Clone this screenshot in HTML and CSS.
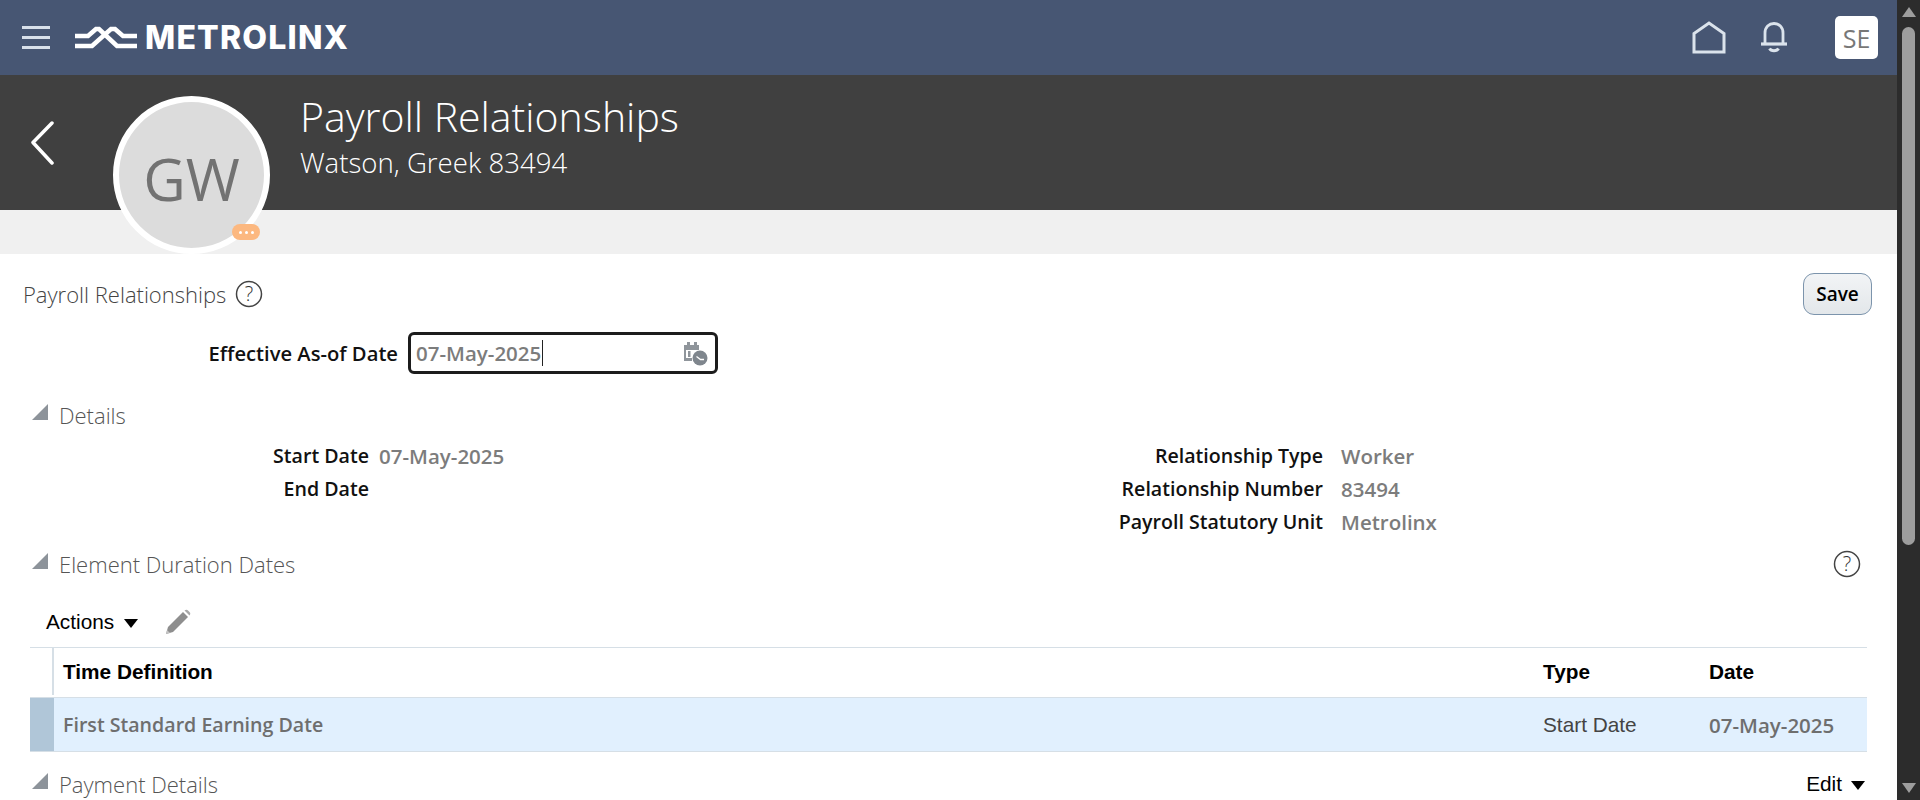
FILE: index.html
```html
<!DOCTYPE html>
<html lang="en">

<head>
    <meta charset="UTF-8">
    <meta name="viewport" content="width=device-width, initial-scale=1.0">
    <title>Payroll Relationships</title>
    <link rel="stylesheet" href="styles.css">
</head>

<body>
    <div id="app">
        <div id="page">
            <header class="topbar">
                <div class="hamburger"><span></span><span></span><span></span></div>
                <svg class="logo-mark" width="62" height="24" viewBox="0 0 62 24" fill="none" stroke="#fff" stroke-width="4.500">
                    <path d="M0 10H13L21 3H24L42 20H62" />
                    <path d="M0 20H17L36 3H40L48 10H62" />
                </svg>
                <span class="logo-text">METROLINX</span>
                <div class="topbar-right">
                    <svg class="home-icon" width="34" height="33" viewBox="0 0 34 33" fill="none" stroke="#dbe3ec" stroke-width="3">
                        <path d="M2 31V12.500L17 2L32 12.500V31Z" />
                    </svg>
                    <svg class="bell-icon" width="28" height="31" viewBox="0 0 28 31" fill="none" stroke="#dbe3ec" stroke-width="2.800">
                        <path d="M5 21V11C5 5 9 1.500 14 1.500S23 5 23 11V21" />
                        <path d="M1 22H27" stroke-width="3.200" />
                        <path d="M9.500 26.500C11 29.500 17 29.500 18.500 26.500" />
                    </svg>
                    <div class="user-box">SE</div>
                </div>
            </header>

            <div class="title-band">
                <svg class="back-icon" width="24" height="44" viewBox="0 0 24 44" fill="none" stroke="#fff" stroke-width="3.500" stroke-linecap="round" stroke-linejoin="round">
                    <path d="M21 2L2 21.500L21 42" />
                </svg>
                <div class="title-text">
                    <h1>Payroll Relationships</h1>
                    <div class="subtitle">Watson, Greek 83494</div>
                </div>
            </div>
            <div class="gray-band"></div>

            <div class="avatar">
                <span>GW</span>
                <div class="avatar-badge"><i></i><i></i><i></i></div>
            </div>

            <main class="content">
                <div class="page-head">
                    <h2>Payroll Relationships</h2>
                    <svg class="help" width="28" height="28" viewBox="0 0 28 28">
                        <circle cx="14" cy="14" r="12.500" fill="none" stroke="#444" stroke-width="1.500" />
                        <text x="14" y="21" text-anchor="middle" class="help-mark">?</text>
                    </svg>
                    <button class="save-btn">Save</button>
                </div>

                <div class="date-row">
                    <label class="date-label">Effective As-of Date</label>
                    <div class="date-input">
                        <span class="date-value">07-May-2025</span><span class="caret"></span>
                        <svg class="cal-icon" width="26" height="26" viewBox="0 0 26 26">
                            <path d="M2 5H5V2H8V5H12V2H15V5H17V10H4V18H10V21H2Z" fill="#8f959b" />
                            <rect x="6" y="11" width="2.500" height="6" fill="#8f959b" />
                            <circle cx="18" cy="18" r="7.500" fill="#7f868d" />
                            <path d="M14.500 16.500L18.500 19.500H22" fill="none" stroke="#fff" stroke-width="1.300" />
                        </svg>
                    </div>
                </div>

                <div class="section-head details-head">
                    <span class="disclose"></span>
                    <h3>Details</h3>
                </div>
                <div class="detail-grid">
                    <div class="detail-col col-left">
                        <div class="detail-row"><span class="detail-label">Start Date</span><span class="detail-value">07-May-2025</span></div>
                        <div class="detail-row"><span class="detail-label">End Date</span></div>
                    </div>
                    <div class="detail-col col-right">
                        <div class="detail-row"><span class="detail-label">Relationship Type</span><span class="detail-value">Worker</span></div>
                        <div class="detail-row"><span class="detail-label">Relationship Number</span><span class="detail-value">83494</span></div>
                        <div class="detail-row"><span class="detail-label">Payroll Statutory Unit</span><span class="detail-value">Metrolinx</span></div>
                    </div>
                </div>

                <div class="section-head duration-head">
                    <span class="disclose"></span>
                    <h3>Element Duration Dates</h3>
                    <svg class="help help-right" width="28" height="28" viewBox="0 0 28 28">
                        <circle cx="14" cy="14" r="12.500" fill="none" stroke="#444" stroke-width="1.500" />
                        <text x="14" y="21" text-anchor="middle" class="help-mark">?</text>
                    </svg>
                </div>

                <div class="toolbar">
                    <span class="menu-link">Actions</span>
                    <span class="arrow-down"></span>
                    <svg class="pencil" width="26" height="26" viewBox="0 0 26 26">
                        <path d="M1 25L3 18L18 3L23 8L8 23Z" fill="#8e8e8e" />
                        <path d="M19.500 1.500C21 0.500 22 0.500 23 1.500L24.500 3C25.500 4 25.500 5 24.500 6.500Z" fill="#a8a8a8" />
                        <path d="M1 25L2 21L5 24Z" fill="#c4c4c4" />
                    </svg>
                </div>

                <div class="table">
                    <div class="table-row table-header">
                        <div class="cell-select"></div>
                        <div class="cell cell-name">Time Definition</div>
                        <div class="cell cell-type">Type</div>
                        <div class="cell cell-date">Date</div>
                    </div>
                    <div class="table-row table-selected">
                        <div class="cell-select"></div>
                        <div class="cell cell-name read-only">First Standard Earning Date</div>
                        <div class="cell cell-type">Start Date</div>
                        <div class="cell cell-date read-only read-date">07-May-2025</div>
                    </div>
                </div>

                <div class="section-head payment-head">
                    <span class="disclose"></span>
                    <h3>Payment Details</h3>
                    <span class="edit-menu"><span class="menu-link">Edit</span><span class="arrow-down"></span></span>
                </div>
            </main>
        </div>

        <div class="scrollbar">
            <span class="scroll-up"></span>
            <span class="scroll-thumb"></span>
            <span class="scroll-down"></span>
        </div>
    </div>
</body>

</html>
```

FILE: styles.css
```css
* {
    box-sizing: border-box;
}

body {
    margin: 0;
    font-family: "Open Sans", "Noto Sans", sans-serif;
    background-color: #fff;
    overflow: hidden;
}

#app {
    display: flex;
    width: 1920px;
    height: 800px;
    overflow: hidden;
}

#page {
    position: relative;
    width: 1897px;
    height: 800px;
    overflow: hidden;
}

/* top bar */
.topbar {
    display: flex;
    align-items: center;
    height: 75px;
    padding-left: 22px;
    background-color: #475673;
}

.hamburger {
    display: flex;
    flex-direction: column;
    gap: 7px;
    width: 28px;
    margin-right: 25px;
}

.hamburger span {
    height: 3px;
    background-color: #d8e0ea;
}

.logo-mark {
    margin-right: 8px;
}

.logo-text {
    font-family: Inter, "Liberation Sans", sans-serif;
    font-weight: 800;
    font-size: 32px;
    letter-spacing: 1.200px;
    color: #fff;
}

.topbar-right {
    display: flex;
    align-items: center;
    margin-left: auto;
    padding-right: 19px;
}

.home-icon {
    margin-right: 34px;
}

.bell-icon {
    margin-right: 47px;
}

.user-box {
    display: flex;
    align-items: center;
    justify-content: center;
    width: 43px;
    height: 43px;
    border-radius: 5px;
    background-color: #fff;
    color: #777;
    font-size: 25px;
}

/* dark title band */
.title-band {
    display: flex;
    height: 135px;
    background-color: #404040;
}

.back-icon {
    margin: 46px 0 0 31px;
}

.title-text {
    margin-left: 245px;
    padding-top: 14px;
    color: #fff;
}

.title-text h1 {
    margin: 0;
    font-weight: 300;
    font-size: 41px;
    line-height: 55px;
}

.subtitle {
    font-weight: 300;
    font-size: 27.600px;
    line-height: 36px;
}

.gray-band {
    height: 44px;
    background-color: #f0f0f0;
}

.avatar {
    position: absolute;
    left: 113px;
    top: 96px;
    display: flex;
    align-items: center;
    justify-content: center;
    width: 157px;
    height: 158px;
    padding-top: 6px;
    border: 6px solid #fff;
    border-radius: 50%;
    background-color: #dcdcdc;
    color: #727272;
    font-size: 58.500px;
}

.avatar-badge {
    position: absolute;
    right: 4px;
    bottom: 8px;
    display: flex;
    align-items: center;
    justify-content: center;
    gap: 3px;
    width: 28px;
    height: 16px;
    border-radius: 8px;
    background-color: #fcb880;
}

.avatar-badge i {
    width: 3px;
    height: 3px;
    border-radius: 50%;
    background-color: #fff;
}

/* main content */
.content {
    padding: 0 30px;
}

.page-head {
    display: flex;
    align-items: center;
    height: 42px;
    margin: 19px 0 0 -7px;
}

.page-head h2 {
    margin: 0 9px 0 0;
    font-weight: 300;
    font-size: 22px;
    color: #444;
}

.help-mark {
    font-family: "Open Sans", sans-serif;
    font-weight: 300;
    font-size: 20px;
    fill: #333;
}

.save-btn {
    width: 69px;
    height: 42px;
    margin-left: auto;
    margin-right: -5px;
    padding: 0;
    border: 1px solid #7c94ac;
    border-radius: 11px;
    background: linear-gradient(#f2f4f6, #e3e7ea);
    color: #000;
    font-family: "Open Sans", sans-serif;
    font-weight: 600;
    font-size: 19px;
}

.date-row {
    display: flex;
    align-items: center;
    margin-top: 17px;
}

.date-label {
    width: 368px;
    font-weight: 600;
    font-size: 20.200px;
    text-align: right;
    color: #111;
}

.date-input {
    display: flex;
    align-items: center;
    width: 310px;
    height: 42px;
    margin-left: 10px;
    padding: 0 7px 0 5px;
    border: 3px solid #1c1c1c;
    border-radius: 6px;
}

.date-value {
    font-weight: 600;
    font-size: 20.500px;
    color: #7c7c7c;
}

.caret {
    width: 1px;
    height: 26px;
    margin-left: 1px;
    background-color: #222;
}

.cal-icon {
    margin-left: auto;
}

.section-head {
    display: flex;
    align-items: center;
    height: 30px;
}

.disclose {
    width: 0;
    height: 0;
    margin: -6px 11px 0 2px;
    border-left: 16px solid transparent;
    border-bottom: 16px solid #8d939a;
}

.section-head h3 {
    margin: 0;
    font-weight: 300;
    font-size: 22px;
    color: #555;
}

.details-head {
    margin-top: 26px;
}

.detail-grid {
    display: flex;
    margin-top: 9px;
}

.detail-col {
    display: flex;
    flex-direction: column;
}

.col-left {
    width: 1292px;
}

.detail-row {
    display: flex;
    align-items: center;
    height: 33px;
}

.detail-label {
    font-weight: 600;
    font-size: 19.600px;
    text-align: right;
    color: #111;
}

.col-left .detail-label {
    width: 339px;
}

.col-left .detail-value {
    margin-left: 10px;
}

.col-right {
    margin-left: -1292px;
    padding-left: 1000px;
}

.col-right .detail-label {
    width: 293px;
}

.col-right .detail-value {
    margin-left: 18px;
}

.detail-value {
    font-weight: 600;
    font-size: 20.500px;
    color: #7c7c7c;
}

.duration-head {
    margin-top: 11px;
}

.help-right {
    margin-left: auto;
    margin-right: 6px;
}

.toolbar {
    display: flex;
    align-items: center;
    height: 36px;
    margin-top: 25px;
    padding-left: 16px;
}

.menu-link {
    font-family: "Liberation Sans", Arial, sans-serif;
    font-size: 20.800px;
    color: #000;
}

.arrow-down {
    width: 0;
    height: 0;
    margin-left: 10px;
    margin-top: 3px;
    border-left: 7px solid transparent;
    border-right: 7px solid transparent;
    border-top: 9px solid #000;
}

.pencil {
    margin-left: 27px;
}

/* table */
.table {
    margin-top: 7px;
    border-top: 1px solid #d6dfe6;
}

.table-row {
    display: flex;
    font-family: "Liberation Sans", Arial, sans-serif;
    font-size: 20.800px;
}

.table-header {
    height: 49px;
    padding-bottom: 2px;
    color: #000;
    font-weight: bold;
}

.table-header .cell-select {
    border-right: 2px solid #d6dfe6;
}

.table-selected {
    height: 55px;
    border-top: 1px solid #d6dfe6;
    border-bottom: 1px solid #d6dfe6;
    background-color: #e1f0fe;
    color: #444;
}

.table-selected .cell-select {
    background-color: #b0c6d8;
}

.cell-select {
    flex: none;
    width: 24px;
}

.cell {
    display: flex;
    align-items: center;
}

.cell-name {
    width: 1489px;
    padding-left: 9px;
}

.cell-type {
    width: 166px;
}

.cell-date {
    flex: 1;
}

.read-only {
    font-family: "Open Sans", sans-serif;
    font-weight: 600;
    font-size: 19.600px;
    color: #6e6e6e;
}

.read-date {
    font-size: 20.500px;
}

.payment-head {
    margin-top: 17px;
}

.edit-menu {
    display: flex;
    align-items: center;
    margin-left: auto;
    padding-right: 2px;
}

.edit-menu .arrow-down {
    margin-left: 9px;
}

/* fake browser scrollbar */
.scrollbar {
    position: relative;
    display: flex;
    flex-direction: column;
    align-items: center;
    width: 23px;
    height: 800px;
    background-color: #2c2c2c;
}

.scroll-up {
    width: 0;
    height: 0;
    margin-top: 7px;
    border-left: 7px solid transparent;
    border-right: 7px solid transparent;
    border-bottom: 10px solid #9e9e9e;
}

.scroll-thumb {
    width: 13px;
    height: 518px;
    margin-top: 10px;
    border-radius: 7px;
    background-color: #9e9e9e;
}

.scroll-down {
    width: 0;
    height: 0;
    margin-top: auto;
    margin-bottom: 7px;
    border-left: 7px solid transparent;
    border-right: 7px solid transparent;
    border-top: 10px solid #9e9e9e;
}
```
